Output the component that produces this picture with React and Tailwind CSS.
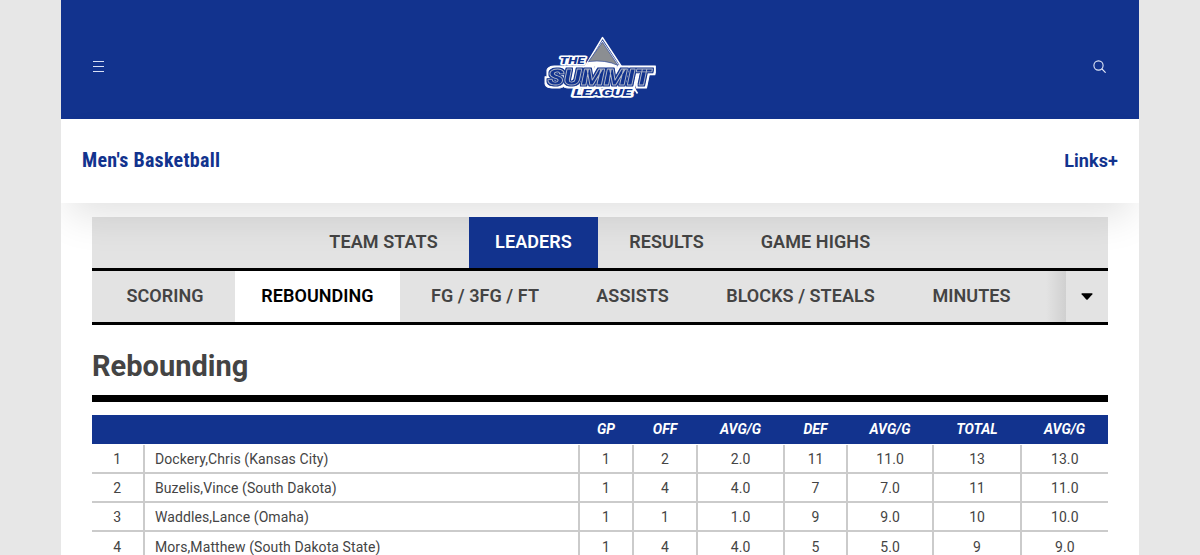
const tabs = [
  { label: "TEAM STATS", width: "w-[161px]" },
  { label: "LEADERS", width: "w-[129px]", active: true },
  { label: "RESULTS", width: "w-[127px]" },
  { label: "GAME HIGHS", width: "w-[161px]" },
];

const subTabs = [
  { label: "SCORING", width: "w-[130px]" },
  { label: "REBOUNDING", width: "w-[165px]", active: true },
  { label: "FG / 3FG / FT", width: "w-[160px]" },
  { label: "ASSISTS", width: "w-[125px]" },
  { label: "BLOCKS / STEALS", width: "w-[201px]" },
  { label: "MINUTES", width: "w-[131px]" },
];

const columns = ["", "", "GP", "OFF", "AVG/G", "DEF", "AVG/G", "TOTAL", "AVG/G"];

const rows = [
  ["1", "Dockery,Chris (Kansas City)", "1", "2", "2.0", "11", "11.0", "13", "13.0"],
  ["2", "Buzelis,Vince (South Dakota)", "1", "4", "4.0", "7", "7.0", "11", "11.0"],
  ["3", "Waddles,Lance (Omaha)", "1", "1", "1.0", "9", "9.0", "10", "10.0"],
  ["4", "Mors,Matthew (South Dakota State)", "1", "4", "4.0", "5", "5.0", "9", "9.0"],
];

const headGrid = "grid grid-cols-[52px_435px_54px_64px_87px_63px_86px_88px_87px]";
const rowGrid = "grid grid-cols-[52.6px_435px_54px_64px_87px_63px_86px_88px_86.4px]";

function LogoWord({ children, x, y, size, length, ...rest }) {
  return (
    <text
      x={x}
      y={y}
      fontSize={size}
      textLength={length}
      lengthAdjust="spacingAndGlyphs"
      fontFamily="Roboto, sans-serif"
      fontWeight="900"
      fontStyle="italic"
      strokeLinejoin="round"
      fill="#12338e"
      {...rest}
    >
      {children}
    </text>
  );
}

function Logo() {
  return (
    <svg width="116" height="66" viewBox="542 35 116 66" role="img" aria-label="The Summit League">
      <defs>
        {/* Blue ring round the letters, then a white ring round that. */}
        <filter id="rings" x="-10%" y="-30%" width="120%" height="160%" colorInterpolationFilters="sRGB">
          <feMorphology in="SourceAlpha" operator="dilate" radius="1" result="a" />
          <feFlood floodColor="#12338e" />
          <feComposite in2="a" operator="in" result="blue" />
          <feMorphology in="SourceAlpha" operator="dilate" radius="3" result="b" />
          <feFlood floodColor="#fff" />
          <feComposite in2="b" operator="in" result="white" />
          <feMerge>
            <feMergeNode in="white" />
            <feMergeNode in="blue" />
            <feMergeNode in="SourceGraphic" />
          </feMerge>
        </filter>
      </defs>
      <path d="M602.5 37.6 621 66H585.5Z" fill="#12338e" stroke="#fff" strokeWidth="1.6" strokeLinejoin="round" />
      <path d="M602.5 40.4 619.5 66H586Z" fill="#fff" />
      <path d="M602.5 42.2 618 65.5 Q606 59.5 588.5 61.5Z" fill="#8b8e92" stroke="#12338e" strokeWidth=".6" />
      <LogoWord x="560" y="64" size="9.4" length="24.5" stroke="#fff" strokeWidth="3" paintOrder="stroke">
        THE
      </LogoWord>
      <LogoWord x="573.5" y="96.3" size="9.6" length="58" stroke="#fff" strokeWidth="3.4" paintOrder="stroke">
        LEAGUE
      </LogoWord>
      <path d="M634 88 637.5 93.5" stroke="#fff" strokeWidth="1.6" />
      <LogoWord x="547.5" y="84.6" size="22.6" length="103.5" stroke="#b4bac8" strokeWidth="0.8" filter="url(#rings)">
        SUMMIT
      </LogoWord>
    </svg>
  );
}

function Header() {
  return (
    <header className="flex h-[119px] shrink-0 items-start justify-between bg-[#12338e] pl-8 pr-[33px]">
      <button aria-label="Menu" className="mt-[61px] flex w-[11px] flex-col gap-1">
        <span className="h-px bg-[#d8e0f5]" />
        <span className="h-px bg-[#d8e0f5]" />
        <span className="h-px bg-[#d8e0f5]" />
      </button>
      <div className="mt-[35px] pl-[2px]">
        <Logo />
      </div>
      <button aria-label="Search" className="mt-[60px]">
        <svg width="13" height="13" viewBox="0 0 13 13" fill="none" stroke="#e3e9f8" strokeWidth="1.1" strokeLinecap="round">
          <circle cx="5.5" cy="5.5" r="4.6" />
          <path d="m9 9 3.3 3.3" />
        </svg>
      </button>
    </header>
  );
}

export default function App() {
  return (
    <div className="flex h-[555px] justify-center overflow-hidden bg-[#e7e7e7] font-['Roboto',sans-serif]">
      <div className="flex w-[1078px] flex-col overflow-hidden bg-white">
        <Header />
        <nav className="relative z-10 flex h-[83.5px] shrink-0 items-center justify-between bg-white px-[21px] pb-px text-[#12338e] shadow-[0_20px_40px_-8px_rgba(0,0,0,0.12)]">
          <span className="font-['Roboto_Condensed','Roboto',sans-serif] text-[20px] font-bold leading-6 tracking-[0.27px]">
            Men's Basketball
          </span>
          <span className="pt-[2px] text-[18px] font-bold leading-6 tracking-[0.1px]">Links+</span>
        </nav>
        <main className="px-[31px] pt-[14px]">
          <div className="flex h-[54.5px] justify-center gap-[5px] border-b-[3px] border-black bg-[#e3e3e3] pr-px">
            {tabs.map((t) => (
              <div
                key={t.label}
                className={`flex shrink-0 items-center justify-center whitespace-nowrap pb-[2px] text-[18px] font-semibold tracking-[0.1px] ${t.width} ${
                  t.active ? "relative z-20 bg-[#12338e] text-white" : "text-[#444]"
                }`}
              >
                {t.label}
              </div>
            ))}
          </div>
          <div className="flex h-[54px] border-b-[3px] border-black bg-[#e3e3e3] pl-[8px]">
            <div className="flex flex-1 gap-[5px]">
              {subTabs.map((t) => (
                <div
                  key={t.label}
                  className={`flex shrink-0 items-center justify-center whitespace-nowrap pb-[2px] text-[18px] font-semibold tracking-[0.05px] ${t.width} ${
                    t.active ? "bg-white text-black" : "text-[#444]"
                  }`}
                >
                  {t.label}
                </div>
              ))}
            </div>
            <div className="w-5 bg-linear-to-r from-transparent to-[#d0d0d0]" />
            <button aria-label="More" className="flex w-[42px] items-center justify-center">
              <svg width="12" height="7" viewBox="0 0 12 7">
                <path d="M1 .3h10q1 .3.4 1L6.7 6.4q-.7.6-1.4 0L.6 1.3Q0 .6 1 .3Z" fill="#000" />
              </svg>
            </button>
          </div>
          <h1 className="mt-[23px] text-[29px] font-bold leading-[36px] text-[#444]">Rebounding</h1>
          <div className="mt-[11px] h-[7px] bg-black" />
          <div className="mt-[13px]">
            <div className={`${headGrid} h-[29px] items-center bg-[#12338e] text-center text-[14px] font-bold italic text-white`}>
              {columns.map((c, i) => (
                <span key={i}>{c}</span>
              ))}
            </div>
            <div className="pt-[0.6px]">
              {rows.map((r) => (
                <div key={r[0]} className={`${rowGrid} h-[29.3px] text-[14px] tracking-[0.09px] text-[#444]`}>
                  {r.map((v, i) => (
                    <div
                      key={i}
                      className={`flex items-center border-b-2 border-[#cbcbcb] pt-[2px] ${
                        i === 1 ? "pl-[10.4px]" : "justify-center"
                      } ${i < 8 ? "border-r-2" : ""} ${i > 1 && i < 8 ? "pl-px" : ""}`}
                    >
                      {v}
                    </div>
                  ))}
                </div>
              ))}
            </div>
          </div>
        </main>
      </div>
    </div>
  );
}
